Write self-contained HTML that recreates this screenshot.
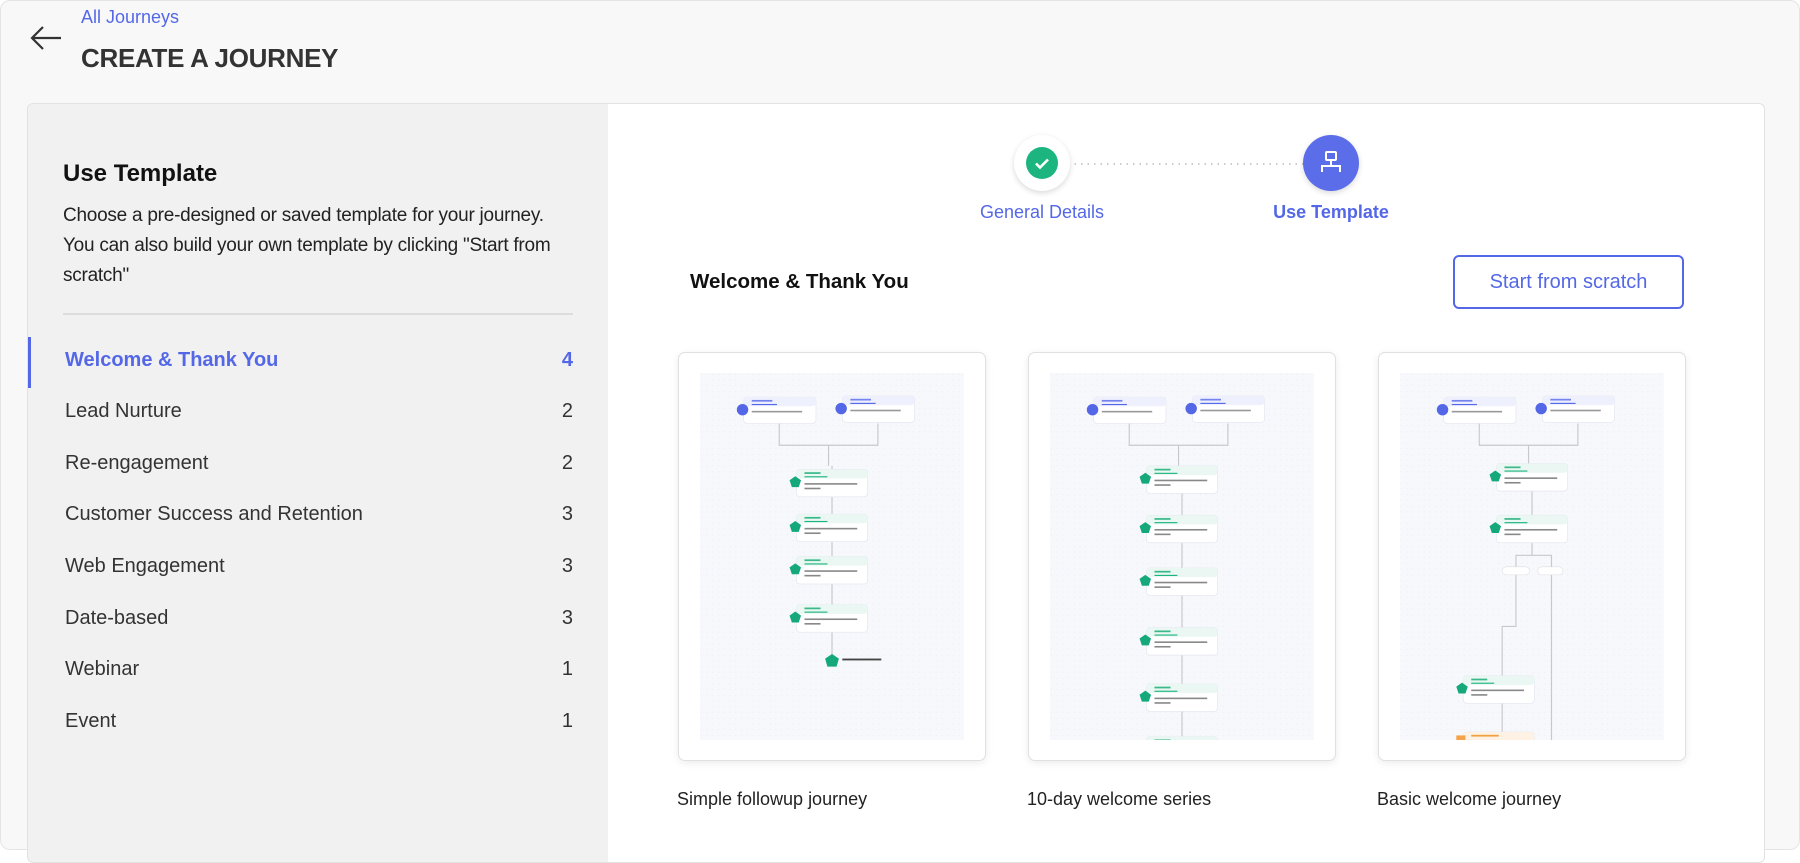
<!DOCTYPE html>
<html><head><meta charset="utf-8"><style>
*{box-sizing:border-box;margin:0;padding:0}
body{width:1800px;height:850px;background:#fff;font-family:"Liberation Sans",sans-serif;overflow:hidden;position:relative}
.page{position:absolute;left:0;top:0;width:1800px;height:850px;background:#f8f8f8;border:1px solid #e4e4e4;border-radius:10px}
.abs{position:absolute}
.crumb{left:80px;top:6px;font-size:18px;color:#5468e7}
.title{left:80px;top:42px;font-size:26px;font-weight:bold;color:#333;letter-spacing:-0.3px}
.panel{left:26px;top:102px;width:1738px;height:760px;border:1px solid #e2e2e2;border-radius:6px;background:#fff;overflow:hidden}
.left{left:0;top:0;width:580px;height:100%;background:#f1f1f1}
.h{left:35px;top:56px;font-size:24px;font-weight:bold;color:#111}
.desc{left:35px;top:97px;font-size:19px;line-height:30px;color:#222;white-space:nowrap;letter-spacing:-0.25px}
.div{left:35px;top:209px;width:510px;height:2px;background:#dcdcdc}
.item{left:37px;width:508px;font-size:20px;color:#333;display:flex;justify-content:space-between}
.item.act{color:#5468e7;font-weight:bold}
.bar{left:0;top:233px;width:3px;height:51px;background:#5468e7}
.step{width:56px;height:56px;border-radius:50%}
.lbl{font-size:18px;color:#5468e7;text-align:center;width:200px}
.btn{left:1425px;top:151px;width:231px;height:54px;border:2px solid #5468e7;border-radius:6px;color:#5468e7;font-size:20px;display:flex;align-items:center;justify-content:center}
.card{width:308px;height:409px;border:1px solid #e0e0e0;border-radius:7px;background:#fff;box-shadow:0 2px 8px rgba(0,0,0,.08)}
.card svg{position:absolute;left:21px;top:20px}
.cap{font-size:18px;color:#222}
</style></head><body>
<div class="page">
<svg class="abs" style="left:28px;top:24px" width="34" height="26" viewBox="0 0 34 26"><path d="M32 13H3M14 2L3 13l11 11" fill="none" stroke="#333" stroke-width="2.2"/></svg>
<div class="abs crumb">All Journeys</div>
<div class="abs title">CREATE A JOURNEY</div>
<div class="abs panel">
 <div class="abs left">
  <div class="abs h">Use Template</div>
  <div class="abs desc">Choose a pre-designed or saved template for your journey.<br>You can also build your own template by clicking "Start from<br>scratch"</div>
  <div class="abs div"></div>
  <div class="abs bar"></div>
  <div class="abs item act" style="top:245px"><span>Welcome &amp; Thank You</span><span>4</span></div>
  <div class="abs item" style="top:296px"><span>Lead Nurture</span><span>2</span></div>
  <div class="abs item" style="top:348px"><span>Re-engagement</span><span>2</span></div>
  <div class="abs item" style="top:399px"><span>Customer Success and Retention</span><span>3</span></div>
  <div class="abs item" style="top:451px"><span>Web Engagement</span><span>3</span></div>
  <div class="abs item" style="top:503px"><span>Date-based</span><span>3</span></div>
  <div class="abs item" style="top:554px"><span>Webinar</span><span>1</span></div>
  <div class="abs item" style="top:606px"><span>Event</span><span>1</span></div>
 </div>
 <svg class="abs" style="left:1040px;top:58px" width="250" height="4"><line x1="0" y1="2" x2="250" y2="2" stroke="#bbb" stroke-width="1.5" stroke-dasharray="1.5 5"/></svg>
 <div class="abs step" style="left:986px;top:31px;background:#fff;box-shadow:0 2px 6px rgba(0,0,0,.15)"></div>
 <svg class="abs" style="left:998px;top:43px" width="32" height="32"><circle cx="16" cy="16" r="16" fill="#1db57f"/><path d="M10 16.5l4 4 8-8" fill="none" stroke="#fff" stroke-width="2.6"/></svg>
 <div class="abs step" style="left:1275px;top:31px;background:#5b6de8;box-shadow:0 2px 6px rgba(0,0,0,.15)"></div>
 <svg class="abs" style="left:1289px;top:45px" width="28" height="28" viewBox="0 0 28 28"><rect x="9" y="3" width="10" height="8" rx="1" fill="none" stroke="#fff" stroke-width="2"/><path d="M14 11v6M5 23v-6h18v6" fill="none" stroke="#fff" stroke-width="2"/></svg>
 <div class="abs lbl" style="left:914px;top:98px">General Details</div>
 <div class="abs lbl" style="left:1203px;top:98px;font-weight:bold">Use Template</div>
 <div class="abs" style="left:662px;top:166px;font-size:20.5px;font-weight:bold;color:#111">Welcome &amp; Thank You</div>
 <div class="abs btn">Start from scratch</div>

 <svg width="0" height="0" style="position:absolute">
  <defs>
   <g id="nb"><rect x="0" y="0" width="63" height="23" rx="3" fill="#fff" stroke="#e3e6ef" stroke-width=".6"/><rect x="0" y="0" width="63" height="8" rx="3" fill="#eef0fd"/><rect x="7" y="2.5" width="18" height="1.5" fill="#7583ee"/><rect x="7" y="6" width="22" height="1" fill="#5468e7"/><rect x="7" y="12" width="44" height="1.4" fill="#999"/><circle cx="-1" cy="11" r="5" fill="#5468e7"/></g>
   <g id="ng"><rect x="0" y="0" width="62" height="24" rx="3" fill="#fff" stroke="#e3e6ef" stroke-width=".6"/><rect x="0" y="0" width="62" height="8" rx="3" fill="#eaf7f2"/><rect x="7" y="2.5" width="14" height="1.5" fill="#3bb98a"/><rect x="7" y="6" width="20" height="1" fill="#1db57f"/><rect x="7" y="12" width="46" height="1.4" fill="#888"/><rect x="7" y="16" width="14" height="1.4" fill="#888"/><path d="M-1 6l5 3.5-2 6h-6l-2-6z" fill="#14a87a"/></g>
   <g id="no"><rect x="0" y="0" width="62" height="24" rx="3" fill="#fff" stroke="#e3e6ef" stroke-width=".6"/><rect x="0" y="0" width="62" height="8" rx="3" fill="#fdf2e3"/><rect x="7" y="2.5" width="24" height="1.5" fill="#f0a040"/><rect x="-6" y="3" width="8" height="6" fill="#f5a34a"/></g>
   <g id="top"><path d="M69 44V63H155V44M112 63V81" fill="none" stroke="#c6c8cc" stroke-width="1"/><use href="#nb" x="38" y="21"/><use href="#nb" x="124" y="20"/></g>
   <pattern id="dots" width="5" height="5" patternUnits="userSpaceOnUse"><rect width="5" height="5" fill="#f7f8fc"/><circle cx="1" cy="1" r=".35" fill="#e3e5ee"/></pattern>
  </defs>
 </svg>

 <div class="abs card" style="left:650px;top:248px">
  <svg width="264" height="367" viewBox="0 0 230 320"><rect width="230" height="320" fill="url(#dots)"/>
   <use href="#top"/>
   <path d="M115 81V250" stroke="#c6c8cc" stroke-width="1"/>
   <use href="#ng" x="84" y="84"/><use href="#ng" x="84" y="123"/><use href="#ng" x="84" y="160"/><use href="#ng" x="84" y="202"/>
   <path d="M115 245l6 4-2 7h-8l-2-7z" fill="#14a87a"/><rect x="124" y="249" width="34" height="1.6" fill="#444"/>
  </svg>
 </div>
 <div class="abs card" style="left:1000px;top:248px">
  <svg width="264" height="367" viewBox="0 0 230 320"><rect width="230" height="320" fill="url(#dots)"/>
   <use href="#top"/>
   <path d="M115 81V320" stroke="#c6c8cc" stroke-width="1"/>
   <use href="#ng" x="84" y="81"/><use href="#ng" x="84" y="124"/><use href="#ng" x="84" y="170"/><use href="#ng" x="84" y="222"/><use href="#ng" x="84" y="271"/><use href="#ng" x="84" y="317"/>
  </svg>
 </div>
 <div class="abs card" style="left:1350px;top:248px">
  <svg width="264" height="367" viewBox="0 0 230 320"><rect width="230" height="320" fill="url(#dots)"/>
   <use href="#top"/>
   <path d="M115 81V159H101V221H89V313M115 159H132V320" fill="none" stroke="#c6c8cc" stroke-width="1"/>
   <use href="#ng" x="84" y="79"/><use href="#ng" x="84" y="124"/>
   <rect x="89" y="169" width="24" height="7" rx="3.5" fill="#fff" stroke="#ddd" stroke-width=".5"/><rect x="120" y="169" width="22" height="7" rx="3.5" fill="#fff" stroke="#ddd" stroke-width=".5"/>
   <use href="#ng" x="55" y="264"/><use href="#no" x="55" y="313"/>
  </svg>
 </div>
 <div class="abs cap" style="left:649px;top:685px">Simple followup journey</div>
 <div class="abs cap" style="left:999px;top:685px">10-day welcome series</div>
 <div class="abs cap" style="left:1349px;top:685px">Basic welcome journey</div>
</div>
</div>
</body></html>
